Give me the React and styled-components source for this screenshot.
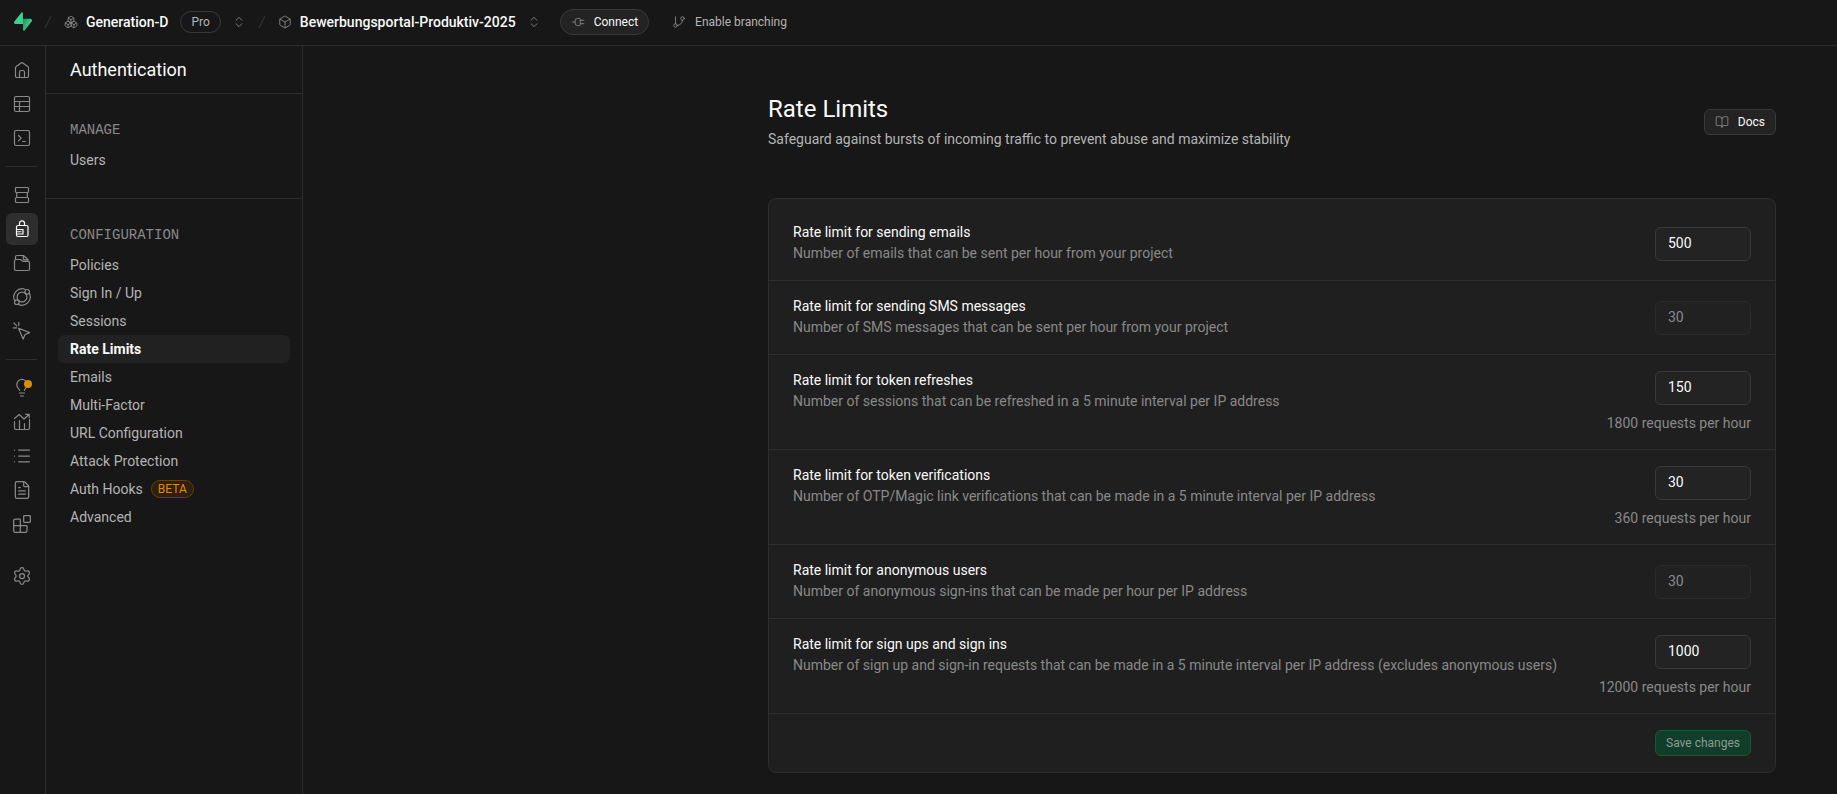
import React from "react";
import styled, { createGlobalStyle, css } from "styled-components";
import {
  Blocks,
  BookOpen,
  Box,
  Boxes,
  ChevronsUpDown,
  FileText,
  GitBranch,
  List,
  Plug,
  Settings,
} from "lucide-react";

const color = {
  bg: "#171717",
  surface: "#1f1f1f",
  control: "#232323",
  selected: "#212121",
  border: "#2e2e2e",
  borderControl: "#393939",
  text: "#fafafa",
  textLight: "#b4b4b4",
  textMuted: "#898989",
  brand: "#3ecf8e",
  warning: "#db8e00",
};

const GlobalStyle = createGlobalStyle`
  *, *::before, *::after { box-sizing: border-box; }
  body {
    margin: 0;
    background: ${color.bg};
    color: ${color.text};
    font-family: Roboto, "Liberation Sans", sans-serif;
    font-size: 14px;
    line-height: 20px;
  }
  h1, h2, h3, p, ul { margin: 0; padding: 0; }
  ul { list-style: none; }
  a { color: inherit; text-decoration: none; }
  button, input { font-family: inherit; }
  svg { display: block; flex-shrink: 0; }
`;

const Page = styled.div`
  display: flex;
  flex-direction: column;
  min-height: 100vh;
`;

/* Top bar */

const TopBar = styled.header`
  display: flex;
  align-items: center;
  height: 46px;
  padding: 0 14px;
  padding-bottom: 2px;
  border-bottom: 1px solid ${color.border};
`;

const LogoLink = styled.a`
  display: flex;
`;

const Slash = styled.svg`
  width: 8px;
  height: 14px;
  margin: 0 12px;
  stroke: ${color.borderControl};
`;

const Crumb = styled.a`
  display: flex;
  align-items: center;
  gap: 8px;
  font-weight: 500;
  svg { color: ${color.textMuted}; }
`;

const PlanBadge = styled.span`
  margin-left: 12px;
  padding: 0 10px;
  border: 1px solid ${color.borderControl};
  border-radius: 12px;
  color: ${color.textLight};
  font-size: 12px;
`;

const SwitcherButton = styled.button`
  display: flex;
  justify-content: center;
  width: 14px;
  margin: 0 0 0 11px;
  padding: 6px 0;
  border: 0;
  background: none;
  color: ${color.textMuted};
`;

const ActionButton = styled.button`
  display: flex;
  align-items: center;
  gap: 9px;
  height: 26px;
  padding: 0 10px;
  border: 1px solid ${color.borderControl};
  border-radius: ${(p) => (p.$round ? "13px" : "6px")};
  background: ${color.control};
  color: ${color.text};
  font-size: 12px;
  line-height: 16px;
  svg { color: ${color.textMuted}; }
  ${(p) =>
    p.$ghost &&
    css`
      border-color: transparent;
      background: none;
      color: ${color.textLight};
    `}
  ${(p) =>
    p.$primary &&
    css`
      border-color: #15593b;
      background: #113e2a;
      color: #8c9a92;
    `}
`;

const TopActions = styled.div`
  display: flex;
  gap: 12px;
  margin-left: 19px;
`;

const HorizontalPlug = styled(Plug)`
  transform: rotate(90deg);
`;

/* Columns */

const Body = styled.div`
  display: flex;
  flex: 1;
`;

const Rail = styled.nav`
  display: flex;
  flex-direction: column;
  flex-shrink: 0;
  gap: 2px;
  width: 46px;
  padding: 8px 6px;
  border-right: 1px solid ${color.border};
`;

const RailDivider = styled.hr`
  width: 31px;
  height: 1px;
  margin: 10px 0;
  border: 0;
  background: ${color.border};
`;

const RailLink = styled.a`
  position: relative;
  display: grid;
  place-items: center;
  width: 32px;
  height: 32px;
  margin-top: ${(p) => (p.$apart ? "18px" : "0")};
  border-radius: 6px;
  background: ${(p) => (p.$active ? color.border : "none")};
  color: ${(p) => (p.$active ? color.text : color.textMuted)};
`;

const AlertDot = styled.span`
  position: absolute;
  top: 8px;
  right: 6px;
  width: 8px;
  height: 8px;
  border-radius: 50%;
  background: ${color.warning};
`;

const Sidebar = styled.aside`
  flex-shrink: 0;
  width: 257px;
  border-right: 1px solid ${color.border};
`;

const SidebarTitle = styled.h2`
  display: flex;
  align-items: center;
  height: 48px;
  padding: 0 24px;
  border-bottom: 1px solid ${color.border};
  font-size: 18px;
  font-weight: 400;
`;

const MenuGroup = styled.section`
  padding: 24px 12px;
  & + & { border-top: 1px solid ${color.border}; }
`;

const MenuHeading = styled.h3`
  margin-bottom: 6px;
  padding: 2px 12px 0;
  color: ${color.textMuted};
  font-family: "Liberation Mono", monospace;
  font-size: 14px;
  font-weight: 400;
  text-transform: uppercase;
`;

const MenuLink = styled.a`
  display: flex;
  align-items: center;
  gap: 8px;
  height: 28px;
  padding: 0 12px 1px;
  border-radius: 6px;
  background: ${(p) => (p.$active ? color.selected : "none")};
  color: ${(p) => (p.$active ? color.text : color.textLight)};
  font-weight: ${(p) => (p.$active ? 700 : 400)};
`;

const BetaBadge = styled.span`
  padding: 0 6px;
  border: 1px solid #673f04;
  border-radius: 9px;
  background: #2b2012;
  color: ${color.warning};
  font-size: 12px;
  line-height: 16px;
`;

/* Main content */

const Main = styled.main`
  flex: 1;
  min-width: 0;
  padding: 48px 61px 21px;
`;

const Content = styled.div`
  max-width: 1008px;
  margin-left: auto;
`;

const PageHeader = styled.div`
  display: flex;
  align-items: center;
  justify-content: space-between;
  margin-bottom: 48px;
`;

const PageTitle = styled.h1`
  margin-bottom: 5px;
  font-size: 24px;
  font-weight: 400;
  line-height: 30px;
`;

const PageLead = styled.p`
  padding-bottom: 1px;
  color: ${color.textLight};
`;

const Card = styled.form`
  padding-top: 8px;
  border: 1px solid ${color.border};
  border-radius: 8px;
  background: ${color.surface};
`;

const Row = styled.div`
  display: flex;
  align-items: ${(p) => (p.$tall ? "flex-start" : "center")};
  justify-content: space-between;
  gap: 24px;
  padding: 16px 24px;
  border-bottom: 1px solid ${color.border};
`;

const RowCopy = styled.div`
  padding-bottom: 1px;
`;

const RowLabel = styled.label`
  display: block;
  margin-bottom: 2px;
  line-height: 18px;
`;

const RowText = styled.p`
  color: ${color.textMuted};
`;

const Field = styled.div`
  display: flex;
  flex-direction: column;
  align-items: flex-end;
  gap: 8px;
`;

const NumberInput = styled.input`
  width: 96px;
  height: 34px;
  padding: 0 12px 2px;
  border: 1px solid ${color.borderControl};
  border-radius: 6px;
  background: ${color.control};
  color: ${color.text};
  font-size: 14px;
  &:disabled {
    border-color: #2a2a2a;
    background: #212121;
    color: #8a8a8a;
  }
`;

const Footer = styled.div`
  display: flex;
  justify-content: flex-end;
  padding: 16px 24px;
`;

/* Icons */

const Stroke = ({ children }) => (
  <svg
    width="20"
    height="20"
    viewBox="0 0 20 20"
    fill="none"
    stroke="currentColor"
    strokeWidth="1.2"
    strokeLinecap="round"
    strokeLinejoin="round"
    aria-hidden="true"
  >
    {children}
  </svg>
);

const Logo = () => (
  <svg width="18" height="19" viewBox="0 0 109 113" aria-hidden="true">
    <defs>
      <linearGradient id="logoShade" x1="54" y1="55" x2="95" y2="72" gradientUnits="userSpaceOnUse">
        <stop stopColor="#249361" />
        <stop offset="1" stopColor={color.brand} />
      </linearGradient>
    </defs>
    <path
      d="M63.7 110.3c-2.9 3.6-8.7 1.6-8.7-3L53.9 40.1h45.2c8.2 0 12.7 9.4 7.6 15.9z"
      fill="url(#logoShade)"
    />
    <path
      d="M45.3 2.1c2.9-3.6 8.7-1.6 8.7.9l.5 69.3H9.8c-8.2 0-12.7-9.4-7.6-15.9z"
      fill={color.brand}
    />
  </svg>
);

const HomeIcon = () => (
  <Stroke>
    <path d="M3.5 8v7.9c0 1 .7 1.6 1.6 1.6h9.8c1 0 1.6-.7 1.6-1.6V8c0-.6-.3-1.1-.8-1.4l-4.8-3.6a1.5 1.5 0 0 0-1.8 0L4.3 6.6C3.8 6.9 3.5 7.4 3.5 8z" />
    <path d="M7.5 17.5v-5.2c0-1 .7-1.8 1.7-1.8h1.6c1 0 1.7.8 1.7 1.8v5.2" />
  </Stroke>
);

const TableIcon = () => (
  <Stroke>
    <rect x="2.5" y="2.5" width="15" height="15" rx="1.5" />
    <path d="M2.5 7.5h15M2.5 12.5h15M7.5 7.5v10" />
  </Stroke>
);

const SqlIcon = () => (
  <Stroke>
    <rect x="2.5" y="2.5" width="15" height="15" rx="1.5" />
    <path d="M6.5 7.5l2.7 2.7-2.7 2.7M10.5 13.5h3" />
  </Stroke>
);

const DatabaseIcon = () => (
  <Stroke>
    <rect x="3.5" y="2.5" width="13" height="5" rx="1" />
    <rect x="3.5" y="12.5" width="13" height="5" rx="1" />
    <path d="M4.7 7.5v5M15.3 7.5v5" />
  </Stroke>
);

const AuthIcon = () => (
  <Stroke>
    <path d="M7.5 6.5V4.3a2.5 2.5 0 0 1 5 0v2.2" />
    <rect x="4.5" y="6.5" width="11.5" height="11" rx="1.5" />
    <path d="M4.500 10.500h6.500v4.500H4.500M4.500 12.750h4.500" />
  </Stroke>
);

const StorageIcon = () => (
  <Stroke>
    <path d="M2.5 8v8c0 .8.7 1.5 1.5 1.5h12c.8 0 1.5-.7 1.5-1.5V9.9c0-.8-.7-1.5-1.5-1.5h-5.2L8.5 6.5H4c-.8 0-1.5.7-1.5 1.5z" />
    <path d="M3.5 6.3V4c0-.8.6-1.5 1.5-1.5h6.5l4.5 4.3v1.4M11.3 2.7v3.2c0 .5.3.9.9.9h3.6" />
  </Stroke>
);

const EdgeIcon = () => (
  <Stroke>
    <circle cx="10" cy="10" r="4.9" />
    <circle cx="15.2" cy="4.8" r="2.3" />
    <circle cx="4.8" cy="15.2" r="2.3" />
    <path d="M13 2.3A8.3 8.3 0 0 0 2.6 13.6M17.5 6.5A8.3 8.3 0 0 1 6.8 17.6" />
  </Stroke>
);

const RealtimeIcon = () => (
  <Stroke>
    <path d="M6.5 7.2l11.2 4.4-4.6 1.9-2 4.6z" />
    <path d="M6.8 1.3v3.2M1.3 6.8h3.2M2 2l2.8 2.8" />
  </Stroke>
);

const AdvisorIcon = () => (
  <Stroke>
    <path d="M12.4 12.5c.2-1 .7-1.7 1.4-2.4a5.2 5.2 0 1 0-7.6 0c.6.6 1.2 1.4 1.4 2.4" />
    <path d="M7.5 15h5M8.5 18h3" />
  </Stroke>
);

const ReportsIcon = () => (
  <Stroke>
    <path d="M2.5 9.5V16c0 .8.7 1.5 1.5 1.5h12c.8 0 1.5-.7 1.5-1.5V7.5M7.5 8.5v9M12.5 11.5v6" />
    <path d="M2.5 6.5l4.7-4 4.8 4.5 5-4.5M13.7 2.3h3.5v3.5" />
  </Stroke>
);

/* Data */

const railItems = [
  { label: "Project overview", icon: <HomeIcon /> },
  { label: "Table editor", icon: <TableIcon /> },
  { label: "SQL editor", icon: <SqlIcon /> },
  "divider-1",
  { label: "Database", icon: <DatabaseIcon /> },
  { label: "Authentication", icon: <AuthIcon />, active: true },
  { label: "Storage", icon: <StorageIcon /> },
  { label: "Edge functions", icon: <EdgeIcon /> },
  { label: "Realtime", icon: <RealtimeIcon /> },
  "divider-2",
  { label: "Advisors", icon: <AdvisorIcon />, alert: true },
  { label: "Reports", icon: <ReportsIcon /> },
  { label: "Logs", icon: <List size={20} strokeWidth={1.5} /> },
  { label: "API docs", icon: <FileText size={20} strokeWidth={1.5} /> },
  { label: "Integrations", icon: <Blocks size={20} strokeWidth={1.5} /> },
  { label: "Project settings", icon: <Settings size={20} strokeWidth={1.5} />, apart: true },
];

const menu = [
  { heading: "Manage", items: [{ label: "Users" }] },
  {
    heading: "Configuration",
    items: [
      { label: "Policies" },
      { label: "Sign In / Up" },
      { label: "Sessions" },
      { label: "Rate Limits", active: true },
      { label: "Emails" },
      { label: "Multi-Factor" },
      { label: "URL Configuration" },
      { label: "Attack Protection" },
      { label: "Auth Hooks", beta: true },
      { label: "Advanced" },
    ],
  },
];

const limits = [
  {
    id: "emails",
    title: "Rate limit for sending emails",
    text: "Number of emails that can be sent per hour from your project",
    value: 500,
  },
  {
    id: "sms",
    title: "Rate limit for sending SMS messages",
    text: "Number of SMS messages that can be sent per hour from your project",
    value: 30,
    disabled: true,
  },
  {
    id: "refreshes",
    title: "Rate limit for token refreshes",
    text: "Number of sessions that can be refreshed in a 5 minute interval per IP address",
    value: 150,
    hint: "1800 requests per hour",
  },
  {
    id: "verifications",
    title: "Rate limit for token verifications",
    text: "Number of OTP/Magic link verifications that can be made in a 5 minute interval per IP address",
    value: 30,
    hint: "360 requests per hour",
  },
  {
    id: "anonymous",
    title: "Rate limit for anonymous users",
    text: "Number of anonymous sign-ins that can be made per hour per IP address",
    value: 30,
    disabled: true,
  },
  {
    id: "signins",
    title: "Rate limit for sign ups and sign ins",
    text: "Number of sign up and sign-in requests that can be made in a 5 minute interval per IP address (excludes anonymous users)",
    value: 1000,
    hint: "12000 requests per hour",
  },
];

function Separator() {
  return (
    <Slash viewBox="0 0 8 14" aria-hidden="true">
      <path d="M1 13L7 1" />
    </Slash>
  );
}

function Switcher({ label }) {
  return (
    <SwitcherButton type="button" aria-label={label}>
      <ChevronsUpDown size={14} strokeWidth={1.5} />
    </SwitcherButton>
  );
}

export default function App() {
  return (
    <Page>
      <GlobalStyle />
      <TopBar>
        <LogoLink href="#" aria-label="Supabase">
          <Logo />
        </LogoLink>
        <Separator />
        <Crumb href="#">
          <Boxes size={14} strokeWidth={1.5} />
          Generation-D
        </Crumb>
        <PlanBadge>Pro</PlanBadge>
        <Switcher label="Switch organization" />
        <Separator />
        <Crumb href="#">
          <Box size={14} strokeWidth={1.5} />
          Bewerbungsportal-Produktiv-2025
        </Crumb>
        <Switcher label="Switch project" />
        <TopActions>
          <ActionButton type="button" $round>
            <HorizontalPlug size={14} strokeWidth={1.5} />
            Connect
          </ActionButton>
          <ActionButton type="button" $ghost>
            <GitBranch size={14} strokeWidth={1.5} />
            Enable branching
          </ActionButton>
        </TopActions>
      </TopBar>
      <Body>
        <Rail aria-label="Project">
          {railItems.map((item) =>
            typeof item === "string" ? (
              <RailDivider key={item} />
            ) : (
              <RailLink
                key={item.label}
                href="#"
                aria-label={item.label}
                $active={item.active}
                $apart={item.apart}
              >
                {item.icon}
                {item.alert && <AlertDot />}
              </RailLink>
            )
          )}
        </Rail>
        <Sidebar>
          <SidebarTitle>Authentication</SidebarTitle>
          {menu.map((group) => (
            <MenuGroup key={group.heading}>
              <MenuHeading>{group.heading}</MenuHeading>
              <ul>
                {group.items.map((item) => (
                  <li key={item.label}>
                    <MenuLink href="#" $active={item.active}>
                      {item.label}
                      {item.beta && <BetaBadge>BETA</BetaBadge>}
                    </MenuLink>
                  </li>
                ))}
              </ul>
            </MenuGroup>
          ))}
        </Sidebar>
        <Main>
          <Content>
            <PageHeader>
              <div>
                <PageTitle>Rate Limits</PageTitle>
                <PageLead>
                  Safeguard against bursts of incoming traffic to prevent abuse and maximize stability
                </PageLead>
              </div>
              <ActionButton type="button">
                <BookOpen size={14} strokeWidth={1.5} />
                Docs
              </ActionButton>
            </PageHeader>
            <Card>
              {limits.map((limit) => (
                <Row key={limit.id} $tall={Boolean(limit.hint)}>
                  <RowCopy>
                    <RowLabel htmlFor={limit.id}>{limit.title}</RowLabel>
                    <RowText>{limit.text}</RowText>
                  </RowCopy>
                  <Field>
                    <NumberInput
                      id={limit.id}
                      inputMode="numeric"
                      defaultValue={limit.value}
                      disabled={limit.disabled}
                    />
                    {limit.hint && <RowText>{limit.hint}</RowText>}
                  </Field>
                </Row>
              ))}
              <Footer>
                <ActionButton type="submit" disabled $primary>
                  Save changes
                </ActionButton>
              </Footer>
            </Card>
          </Content>
        </Main>
      </Body>
    </Page>
  );
}
